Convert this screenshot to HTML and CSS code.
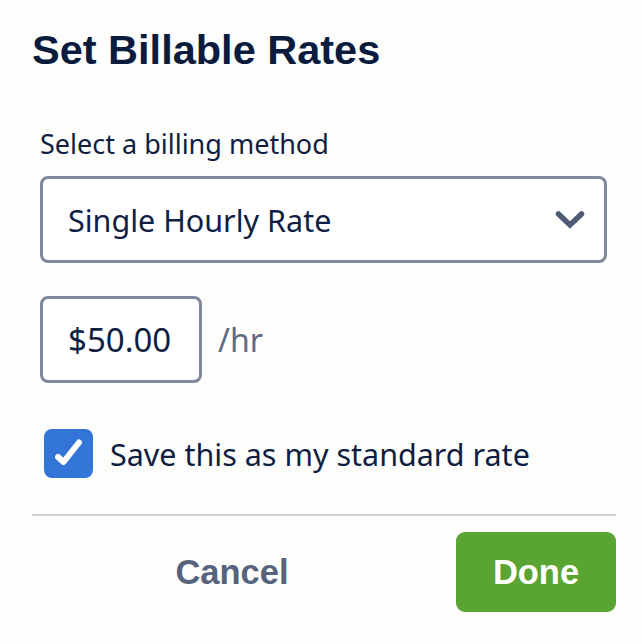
FILE: index.html
```html
<!DOCTYPE html>
<html lang="en">
<head>
<meta charset="utf-8">
<title>Set Billable Rates</title>
<link rel="stylesheet" href="styles.css">
</head>
<body>
<div class="dialog">
  <h1 class="title">Set Billable Rates</h1>
  <div class="form">
    <div class="label">Select a billing method</div>
    <div class="select">
      <span class="select-value">Single Hourly Rate</span>
      <svg class="chevron" width="30" height="20" viewBox="0 0 30 20" aria-hidden="true">
        <polyline points="3.5,4 15,15 26.5,4" fill="none" stroke="#4f5c76" stroke-width="5.5" stroke-linecap="round" stroke-linejoin="miter"/>
      </svg>
    </div>
    <div class="rate-row">
      <div class="rate-input">$50.00</div>
      <span class="unit">/hr</span>
    </div>
    <label class="check-row">
      <span class="checkbox">
        <svg width="49" height="49" viewBox="0 0 49 49" aria-hidden="true">
          <polyline points="14,28 19.5,33 35,13.5" fill="none" stroke="#ffffff" stroke-width="6" stroke-linecap="round" stroke-linejoin="round"/>
        </svg>
      </span>
      <span class="check-label">Save this as my standard rate</span>
    </label>
  </div>
  <div class="divider"></div>
  <div class="footer">
    <button class="btn-cancel" type="button">Cancel</button>
    <button class="btn-done" type="button">Done</button>
  </div>
</div>
</body>
</html>
```

FILE: styles.css
```css
html, body {
  margin: 0;
  padding: 0;
  background: #fdfdfc;
}

body {
  font-family: "Noto Sans", "DejaVu Sans", sans-serif;
  color: #0f1e42;
}

.dialog {
  padding: 26px 26px 0 32px;
}

.title {
  margin: 0;
  font-family: "Liberation Sans", Arial, sans-serif;
  font-weight: 700;
  font-size: 41.5px;
  line-height: 48px;
  color: #0b1b3e;
}

.form {
  padding: 0 9px 0 8px;
  display: flex;
  flex-direction: column;
}

.label {
  margin-top: 54px;
  font-size: 27px;
  line-height: 32px;
}

.select {
  margin-top: 16px;
  height: 87px;
  box-sizing: border-box;
  border: 3px solid #7f899b;
  border-radius: 8px;
  background: #ffffff;
  display: flex;
  align-items: center;
  justify-content: space-between;
  padding: 0 19px 0 25px;
}

.select-value {
  font-size: 30.5px;
  line-height: 36px;
}

.chevron {
  display: block;
}

.rate-row {
  margin-top: 33px;
  display: flex;
  align-items: center;
  gap: 16px;
}

.rate-input {
  width: 162px;
  height: 87px;
  box-sizing: border-box;
  border: 3px solid #7f899b;
  border-radius: 8px;
  background: #ffffff;
  display: flex;
  align-items: center;
  padding-left: 25px;
  font-size: 33px;
  line-height: 36px;
}

.unit {
  font-size: 32px;
  line-height: 36px;
  color: #5d6a82;
}

.check-row {
  margin-top: 46px;
  margin-left: 4px;
  display: flex;
  align-items: center;
  gap: 17px;
}

.checkbox {
  width: 49px;
  height: 49px;
  border-radius: 8px;
  background: #3274d8;
  display: block;
  flex: none;
}

.checkbox svg {
  display: block;
}

.check-label {
  font-size: 30.5px;
  line-height: 36px;
}

.divider {
  margin-top: 36px;
  height: 2px;
  background: #c9ccd7;
}

.footer {
  margin-top: 16px;
  display: flex;
  align-items: center;
  gap: 24px;
}

.btn-cancel,
.btn-done {
  font-family: "Liberation Sans", Arial, sans-serif;
  font-weight: 700;
  font-size: 34.5px;
  border: none;
  padding: 0;
  margin: 0;
  height: 80px;
  cursor: pointer;
}

.btn-cancel {
  flex: 1;
  background: transparent;
  color: #56637d;
}

.btn-done {
  width: 160px;
  flex: none;
  background: #5aa532;
  color: #ffffff;
  border-radius: 9px;
}
```
